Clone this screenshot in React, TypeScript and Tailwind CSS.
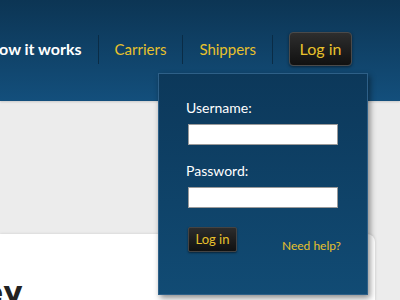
export default function App() {
  return (
    <div className="relative w-[400px] h-[300px] overflow-hidden bg-[#ececec] font-['Lato',sans-serif]">
      <header className="h-[101px] bg-gradient-to-b from-[#0c3554] to-[#134f7c] shadow-[0_1px_2px_rgba(0,0,0,0.15)]">
        <nav className="flex items-center gap-4 pt-8 -ml-[13px]">
          <a className="text-[16px] font-bold text-white leading-[34px]">How it works</a>
          <span className="w-px h-[29px] bg-[#0a2c46]" />
          <a className="text-[15px] text-[#e8c12c] leading-[34px]">Carriers</a>
          <span className="w-px h-[29px] bg-[#0a2c46]" />
          <a className="text-[15px] text-[#e8c12c] leading-[34px]">Shippers</a>
          <span className="w-px h-[29px] bg-[#0a2c46]" />
          <button className="w-[63px] h-[34px] rounded-[4px] border border-[#4a4a4a] bg-gradient-to-b from-[#2e2e2e] to-[#111111] text-[16px] text-[#e8c12c] shadow-[0_1px_3px_rgba(0,0,0,0.5)]">
            Log in
          </button>
        </nav>
      </header>

      <main className="pt-[133px]">
        <section className="w-[375px] h-[100px] rounded-tr-[8px] bg-white shadow-[0_0_3px_rgba(0,0,0,0.15)] pt-[44px] overflow-hidden">
          <h2 className="-ml-[17px] text-[30px] font-bold text-[#222] leading-none font-['DejaVu_Sans',sans-serif]">ey</h2>
        </section>
      </main>

      <div className="absolute left-[158px] top-[73px] w-[210px] h-[222px] border border-[#2e6088] bg-gradient-to-b from-[#0c385a] to-[#114b74] shadow-[2px_3px_6px_rgba(0,0,0,0.45)] pl-[27px] pr-[26px] pt-[26px]">
        <label className="block text-[14px] text-white leading-[16px]">Username:</label>
        <input type="text" className="block mt-[8px] ml-[2px] w-[150px] h-[21px] bg-white border border-[#9a9a9a]" />
        <label className="block mt-[18px] text-[14px] text-white leading-[16px]">Password:</label>
        <input type="password" className="block mt-[8px] ml-[2px] w-[150px] h-[21px] bg-white border border-[#9a9a9a]" />
        <div className="flex items-start justify-between mt-[19px] pl-[2px]">
          <button className="w-[49px] h-[25px] rounded-[2px] border border-[#444] bg-gradient-to-b from-[#2c2c2c] to-[#111111] text-[13px] text-[#e8c12c] shadow-[0_1px_2px_rgba(0,0,0,0.5)]">
            Log in
          </button>
          <a className="mt-[12px] text-[12px] leading-[14px] text-[#e8c12c]">Need help?</a>
        </div>
      </div>
    </div>
  );
}
